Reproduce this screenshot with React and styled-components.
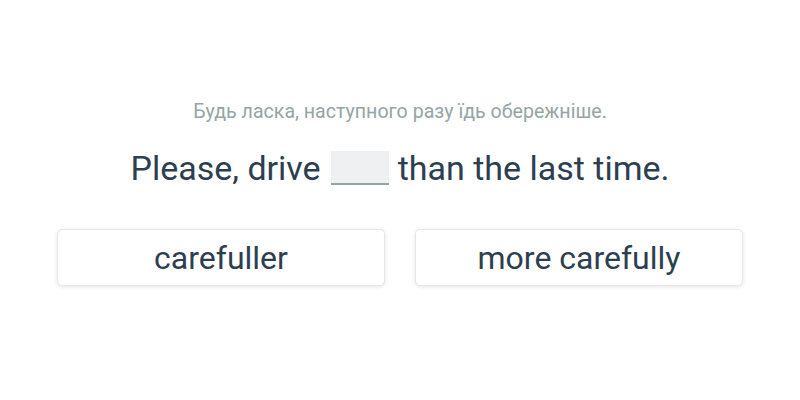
import React from 'react'
import styled, { createGlobalStyle } from 'styled-components'

const GlobalStyle = createGlobalStyle`
    html, body {
        margin: 0;
        padding: 0;
        background: #ffffff;
        font-family: Roboto, "Noto Sans", sans-serif;
    }
`

const Page = styled.div`
    width: 800px;
    height: 400px;
    display: flex;
    flex-direction: column;
    align-items: center;
    padding-top: 98px;
    box-sizing: border-box;
`

const Hint = styled.div`
    font-size: 19.6px;
    line-height: 28px;
    color: #95a5a6;
`

const Sentence = styled.div`
    margin-top: 20px;
    display: flex;
    align-items: center;
    font-size: 34px;
    line-height: 44px;
    color: #2c3e50;
    white-space: pre;
`

const Blank = styled.span`
    display: inline-block;
    width: 58px;
    height: 32px;
    margin: 0 9px 0 10px;
    background: #eef0f2;
    border-bottom: 2px solid #95a5a6;
`

const Choices = styled.div`
    margin-top: 39px;
    display: grid;
    grid-template-columns: 328px 328px;
    column-gap: 30px;
`

const Choice = styled.button`
    height: 57px;
    background: #ffffff;
    border: 1px solid #e6e6e6;
    border-radius: 5px;
    box-shadow: 0 1px 4px rgba(0, 0, 0, 0.1);
    font-family: Roboto, "Noto Sans", sans-serif;
    font-size: 32px;
    color: #2c3e50;
    cursor: pointer;
    padding: 0;
`

const App = () => {
    const options = ['carefuller', 'more carefully']
    return (
        <>
            <GlobalStyle />
            <Page>
                <Hint>Будь ласка, наступного разу їдь обережніше.</Hint>
                <Sentence>
                    Please, drive<Blank />than the last time.
                </Sentence>
                <Choices>
                    {options.map(option => (
                        <Choice key={option}>{option}</Choice>
                    ))}
                </Choices>
            </Page>
        </>
    )
}

export default App
